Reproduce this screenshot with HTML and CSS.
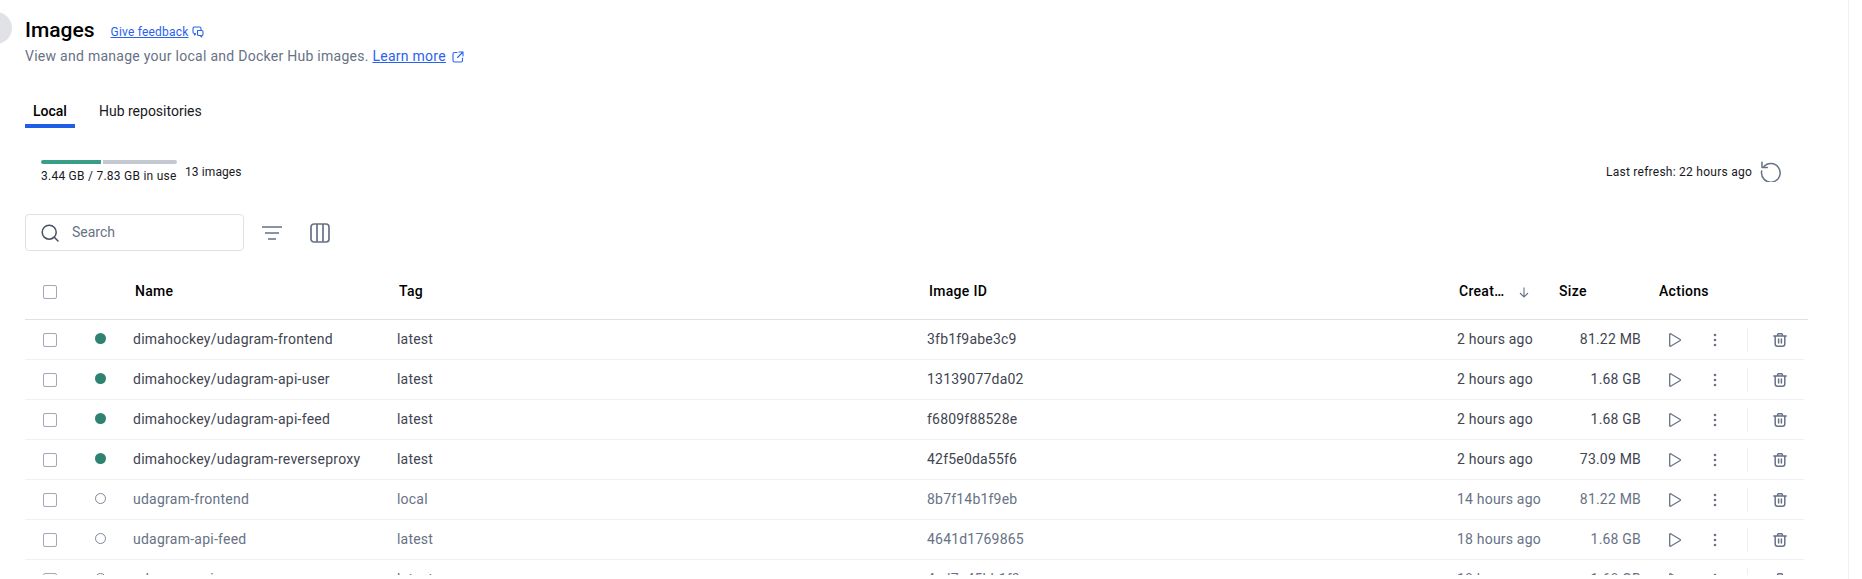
FILE: index.html
```html
<!DOCTYPE html>
<html lang="en">
<head>
  <meta charset="UTF-8">
  <title>Images</title>
  <link rel="stylesheet" href="styles.css">
</head>
<body>
  <svg width="0" height="0" class="defs">
    <symbol id="play" viewBox="0 0 14 14"><path d="M1.700 1.200v11.600a.6.6 0 0 0 .9.500l9.600-5.800a.6.6 0 0 0 0-1L2.600.700a.6.6 0 0 0-.9.500z" fill="none" stroke="currentColor" stroke-width="1.300" stroke-linejoin="round"/></symbol>
    <symbol id="dots" viewBox="0 0 14 14"><circle cx="7" cy="2" r="1.300" fill="currentColor"/><circle cx="7" cy="7" r="1.300" fill="currentColor"/><circle cx="7" cy="12" r="1.300" fill="currentColor"/></symbol>
    <symbol id="trash" viewBox="0 0 14 14"><path d="M.8 3h12.400M4.600 3V1.700q0-.9.900-.9h3q.9 0 .9.900V3M2.200 3v8q0 2.200 2.200 2.200h5.200q2.200 0 2.200-2.200V3M5.600 6v4M8.400 6v4" fill="none" stroke="currentColor" stroke-width="1.500" stroke-linecap="round"/></symbol>
  </svg>

  <div class="avatar"></div>

  <main class="page">
    <header class="head">
      <div class="title-row">
        <h1>Images</h1>
        <a class="feedback">Give feedback</a>
        <svg class="link-icon" width="12" height="12" viewBox="0 0 12 12"><path d="M9 4V2.500Q9 1 7.500 1h-5Q1 1 1 2.500V6q0 1.500 1.500 1.500V9L4 7.500M5.500 4.500h4.200q1.300 0 1.300 1.300v2.400q0 1.300-1.300 1.300V11L8.200 9.500H6.800q-1.300 0-1.300-1.300z" fill="none" stroke="currentColor" stroke-width="1.100" stroke-linejoin="round"/></svg>
      </div>
      <p class="sub">View and manage your local and Docker Hub images. <a class="learn">Learn more</a>
        <svg class="link-icon ext" width="12" height="12" viewBox="0 0 12 12"><path d="M5 1.500H2.500Q1 1.500 1 3v6.500Q1 11 2.500 11H9q1.500 0 1.500-1.500V7M7 1h4v4M11 1L5.500 6.500" fill="none" stroke="currentColor" stroke-width="1.100" stroke-linecap="round" stroke-linejoin="round"/></svg>
      </p>
    </header>

    <nav class="tabs">
      <a class="tab active">Local</a>
      <a class="tab">Hub repositories</a>
    </nav>

    <section class="usage">
      <div class="usage-left">
        <div class="usage-meter">
          <div class="meter">
            <span class="meter-used"></span>
            <span class="meter-free"></span>
          </div>
          <span class="usage-text">3.44 GB / 7.83 GB in use</span>
        </div>
        <span class="count">13 images</span>
      </div>
      <div class="refresh">
        <span>Last refresh: 22 hours ago</span>
        <svg width="22" height="22" viewBox="0 0 22 22"><path d="M3.200 7.500A9.300 9.300 0 1 1 1.700 11M2 2.200v5.300h5.300" fill="none" stroke="currentColor" stroke-width="1.500" stroke-linecap="round" stroke-linejoin="round"/></svg>
      </div>
    </section>

    <section class="toolbar">
      <div class="search">
        <svg width="18" height="18" viewBox="0 0 18 18"><circle cx="8.200" cy="8.200" r="7" fill="none" stroke="currentColor" stroke-width="1.500"/><path d="M13.300 13.300L17 17" stroke="currentColor" stroke-width="1.500" stroke-linecap="round"/></svg>
        <span>Search</span>
      </div>
      <svg class="tool" width="20" height="14" viewBox="0 0 20 14"><path d="M0 1h20M3 7h14M6 13h8" stroke="currentColor" stroke-width="1.500"/></svg>
      <svg class="tool" width="20" height="20" viewBox="0 0 20 20"><rect x="1" y="1" width="18" height="18" rx="3" fill="none" stroke="currentColor" stroke-width="1.700"/><path d="M7 1v18M13 1v18" stroke="currentColor" stroke-width="1.700"/></svg>
    </section>

    <section class="table">
      <div class="row row-head">
        <span class="check"></span>
        <span class="dot-cell"></span>
        <span class="name">Name</span>
        <span class="tag">Tag</span>
        <span class="id">Image ID</span>
        <span class="created">Creat… <svg width="10" height="11" viewBox="0 0 10 11"><path d="M5 .5v9.500M1 6l4 4 4-4" fill="none" stroke="currentColor" stroke-width="1.100"/></svg></span>
        <span class="size">Size</span>
        <span class="actions">Actions</span>
      </div>

      <div class="row">
        <span class="check"></span><span class="dot-cell"><i class="dot"></i></span>
        <span class="name">dimahockey/udagram-frontend</span><span class="tag">latest</span><span class="id">3fb1f9abe3c9</span>
        <span class="created">2 hours ago</span><span class="size">81.22 MB</span>
        <span class="actions"><svg class="a-play"><use href="#play"/></svg><svg class="a-dots"><use href="#dots"/></svg><i class="sep"></i><svg class="a-trash"><use href="#trash"/></svg></span>
      </div>
      <div class="row">
        <span class="check"></span><span class="dot-cell"><i class="dot"></i></span>
        <span class="name">dimahockey/udagram-api-user</span><span class="tag">latest</span><span class="id">13139077da02</span>
        <span class="created">2 hours ago</span><span class="size">1.68 GB</span>
        <span class="actions"><svg class="a-play"><use href="#play"/></svg><svg class="a-dots"><use href="#dots"/></svg><i class="sep"></i><svg class="a-trash"><use href="#trash"/></svg></span>
      </div>
      <div class="row">
        <span class="check"></span><span class="dot-cell"><i class="dot"></i></span>
        <span class="name">dimahockey/udagram-api-feed</span><span class="tag">latest</span><span class="id">f6809f88528e</span>
        <span class="created">2 hours ago</span><span class="size">1.68 GB</span>
        <span class="actions"><svg class="a-play"><use href="#play"/></svg><svg class="a-dots"><use href="#dots"/></svg><i class="sep"></i><svg class="a-trash"><use href="#trash"/></svg></span>
      </div>
      <div class="row">
        <span class="check"></span><span class="dot-cell"><i class="dot"></i></span>
        <span class="name">dimahockey/udagram-reverseproxy</span><span class="tag">latest</span><span class="id">42f5e0da55f6</span>
        <span class="created">2 hours ago</span><span class="size">73.09 MB</span>
        <span class="actions"><svg class="a-play"><use href="#play"/></svg><svg class="a-dots"><use href="#dots"/></svg><i class="sep"></i><svg class="a-trash"><use href="#trash"/></svg></span>
      </div>
      <div class="row idle">
        <span class="check"></span><span class="dot-cell"><i class="dot"></i></span>
        <span class="name">udagram-frontend</span><span class="tag">local</span><span class="id">8b7f14b1f9eb</span>
        <span class="created">14 hours ago</span><span class="size">81.22 MB</span>
        <span class="actions"><svg class="a-play"><use href="#play"/></svg><svg class="a-dots"><use href="#dots"/></svg><i class="sep"></i><svg class="a-trash"><use href="#trash"/></svg></span>
      </div>
      <div class="row idle">
        <span class="check"></span><span class="dot-cell"><i class="dot"></i></span>
        <span class="name">udagram-api-feed</span><span class="tag">latest</span><span class="id">4641d1769865</span>
        <span class="created">18 hours ago</span><span class="size">1.68 GB</span>
        <span class="actions"><svg class="a-play"><use href="#play"/></svg><svg class="a-dots"><use href="#dots"/></svg><i class="sep"></i><svg class="a-trash"><use href="#trash"/></svg></span>
      </div>
      <div class="row idle">
        <span class="check"></span><span class="dot-cell"><i class="dot"></i></span>
        <span class="name">udagram-api-user</span><span class="tag">latest</span><span class="id">4cd7e45bb1f3</span>
        <span class="created">18 hours ago</span><span class="size">1.68 GB</span>
        <span class="actions"><svg class="a-play"><use href="#play"/></svg><svg class="a-dots"><use href="#dots"/></svg><i class="sep"></i><svg class="a-trash"><use href="#trash"/></svg></span>
      </div>
    </section>
  </main>

  <div class="scroll-edge"></div>
</body>
</html>
```

FILE: styles.css
```css
html, body {
  height: 100%;
  overflow: hidden;
}
body {
  margin: 0;
  display: flex;
  align-items: flex-start;
  font-family: Roboto, sans-serif;
  font-size: 14px;
  color: #17191e;
  background: #fff;
  position: relative;
}
.defs {
  position: absolute;
}
.avatar {
  position: absolute;
  left: -20px;
  top: 12px;
  width: 32px;
  height: 32px;
  border-radius: 50%;
  background: #e1e2e6;
}
.page {
  width: 1808px;
  padding: 0 0 0 25px;
  height: 575px;
  overflow: hidden;
  box-sizing: border-box;
}
.head {
  padding-top: 17px;
}
.title-row {
  display: flex;
  align-items: center;
  height: 25px;
}
h1 {
  margin: 0;
  font-size: 21px;
  font-weight: 500;
  color: #000;
}
.feedback {
  margin: 4px 0 0 16px;
  font-size: 12px;
  letter-spacing: .2px;
  color: #2a62f0;
  text-decoration: underline;
}
.link-icon {
  color: #2a62f0;
  margin-left: 4px;
  margin-top: 5px;
}
.sub {
  margin: 5px 0 0;
  font-size: 14px;
  line-height: 18px;
  letter-spacing: .27px;
  color: #677285;
}
.learn {
  color: #2a62f0;
  text-decoration: underline;
}
.ext {
  vertical-align: -2px;
  margin-left: 2px;
  margin-top: 0;
}
.tabs {
  display: flex;
  margin-top: 34px;
  gap: 16px;
}
.tab {
  padding: 0 8px;
  height: 25px;
  line-height: 24px;
  color: #17191e;
}
.tab.active {
  border-bottom: 4px solid #1f5fe6;
  color: #000;
  font-weight: 500;
}
.usage {
  display: flex;
  justify-content: space-between;
  margin-top: 32px;
}
.usage-left {
  display: flex;
  padding-left: 16px;
  gap: 8px;
}
.usage-meter {
  display: flex;
  flex-direction: column;
  width: 136px;
}
.meter {
  display: flex;
  gap: 2px;
  height: 4px;
}
.meter-used {
  width: 60px;
  background: #3a9d86;
  border-radius: 2px 0 0 2px;
}
.meter-free {
  flex: 1;
  background: #c4c8d1;
  border-radius: 0 2px 2px 0;
}
.usage-text {
  margin-top: 4px;
  font-size: 12px;
  line-height: 16px;
  letter-spacing: .25px;
  white-space: nowrap;
}
.count {
  margin-top: 4px;
  font-size: 12px;
  line-height: 16px;
  letter-spacing: .1px;
}
.refresh {
  display: flex;
  align-items: center;
  gap: 8px;
  font-size: 12px;
  letter-spacing: .25px;
  height: 22px;
  margin-right: 26px;
  padding-top: 1px;
}
.refresh svg {
  margin-top: -2px;
  color: #677285;
}
.toolbar {
  display: flex;
  align-items: center;
  margin-top: 30px;
}
.search {
  display: flex;
  align-items: center;
  gap: 13px;
  width: 219px;
  height: 37px;
  box-sizing: border-box;
  padding-left: 15px;
  border: 1px solid #dfe1e6;
  border-radius: 4px;
  color: #677285;
}
.search span {
  padding-bottom: 2px;
}
.search svg {
  color: #47505f;
}
.tool {
  color: #677285;
}
.search + .tool {
  margin-left: 18px;
}
.tool + .tool {
  margin-left: 28px;
}
.table {
  margin-top: 22px;
  width: 1783px;
}
.row {
  display: grid;
  grid-template-columns: 60px 48px 264px 530px 530px 100px 84px 1fr;
  align-items: center;
  height: 40px;
  border-bottom: 1px solid #f0f1f3;
  box-sizing: border-box;
  margin-right: 4px;
  font-size: 14px;
  letter-spacing: .2px;
  color: #3f4551;
}
.row .name {
  letter-spacing: .25px;
}
.name, .tag, .id, .created, .size {
  padding-bottom: 2px;
}
.row-head {
  height: 47px;
  margin-right: 0;
  padding-bottom: 9px;
  border-bottom: 1px solid #dfe1e6;
  color: #000;
  font-weight: 500;
  letter-spacing: .3px;
}
.row-head .name,
.row-head .tag,
.row-head .id,
.row-head .created,
.row-head .size {
  padding-left: 2px;
}
.idle {
  color: #677285;
}
.check {
  width: 14px;
  height: 14px;
  box-sizing: border-box;
  margin-left: 18px;
  border: 1px solid #a0a7b6;
  border-radius: 2px;
}
.dot {
  display: block;
  width: 11px;
  height: 11px;
  box-sizing: border-box;
  margin-left: 10px;
  margin-top: -2px;
  border-radius: 50%;
  background: #2e8272;
}
.idle .dot {
  background: none;
  border: 1px solid #7c8597;
}
.created svg {
  color: #677285;
  margin-left: 11px;
  vertical-align: -2px;
}
.size {
  text-align: right;
}
.row-head .size {
  text-align: left;
}
.actions {
  display: flex;
  align-items: center;
  padding-left: 27px;
}
.row-head .actions {
  padding-left: 18px;
  padding-bottom: 2px;
}
.a-play,
.a-dots,
.a-trash {
  width: 14px;
  height: 14px;
  color: #677285;
}
.a-dots {
  margin-left: 26px;
}
.sep {
  width: 1px;
  height: 24px;
  margin-left: 25px;
  background: #eceef1;
}
.a-trash {
  margin-left: 25px;
}
.scroll-edge {
  position: absolute;
  left: 1848px;
  top: 0;
  bottom: 0;
  width: 1px;
  background: #f0f1f3;
}
```
